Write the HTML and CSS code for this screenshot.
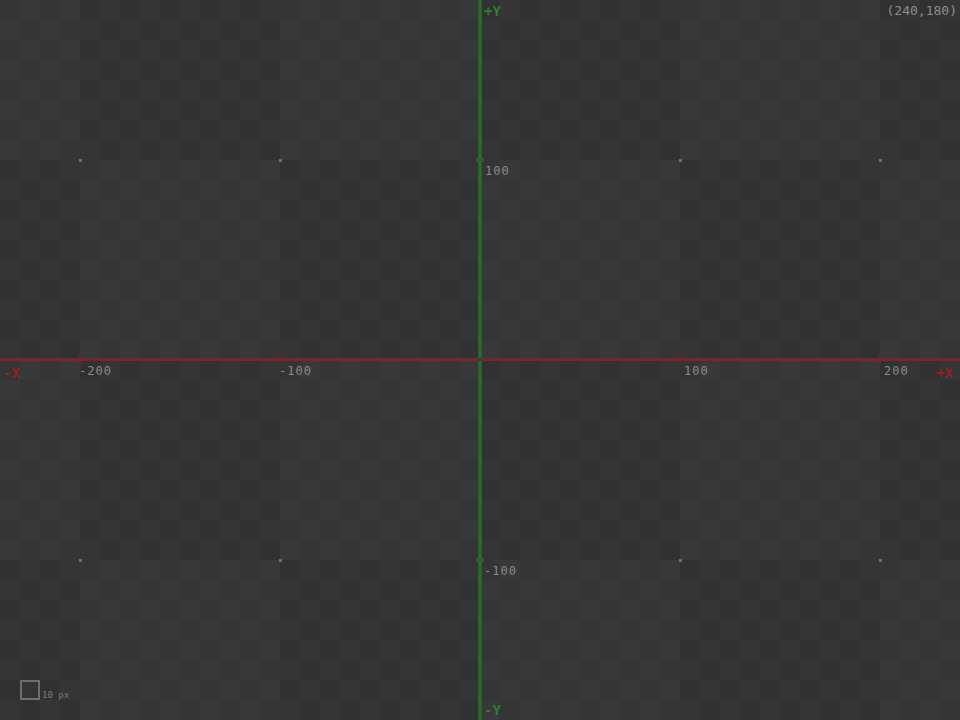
FILE: index.html
```html
<!doctype html>
<html lang="en">
<head>
	<meta charset="utf-8" />
	<title>xy grid</title>
	<link rel="stylesheet" href="styles.css">
</head>
<body>
	<!-- 坐标网格 -->
	<div class="stage">
		<div class="axis-x"></div>
		<div class="axis-y"></div>
		<div class="origin"></div>

		<!-- 刻度 x -->
		<i class="tick-x" style="left:79px"></i>
		<i class="tick-x" style="left:279px"></i>
		<i class="tick-x" style="left:679px"></i>
		<i class="tick-x" style="left:879px"></i>
		<!-- 刻度 y -->
		<i class="tick-y" style="top:158px"></i>
		<i class="tick-y" style="top:558px"></i>
		<!-- 网格点 -->
		<i class="dot" style="left:79px;top:159px"></i>
		<i class="dot" style="left:279px;top:159px"></i>
		<i class="dot" style="left:679px;top:159px"></i>
		<i class="dot" style="left:879px;top:159px"></i>
		<i class="dot" style="left:79px;top:559px"></i>
		<i class="dot" style="left:279px;top:559px"></i>
		<i class="dot" style="left:679px;top:559px"></i>
		<i class="dot" style="left:879px;top:559px"></i>

		<span class="lbl" style="left:79px;top:365px">-200</span>
		<span class="lbl" style="left:279px;top:365px">-100</span>
		<span class="lbl" style="left:684px;top:365px">100</span>
		<span class="lbl" style="left:884px;top:365px">200</span>
		<span class="lbl" style="left:485px;top:165px">100</span>
		<span class="lbl" style="left:484px;top:565px">-100</span>

		<span class="lbl red" style="left:3px;top:366px">-X</span>
		<span class="lbl red" style="left:936px;top:366px">+X</span>
		<span class="lbl green" style="left:484px;top:4px">+Y</span>
		<span class="lbl green" style="left:484px;top:703px">-Y</span>

		<span class="lbl size" style="right:3px;top:4px">(240,180)</span>

		<div class="scale">
			<div class="scale-box"></div>
			<span class="scale-txt">10 px</span>
		</div>
	</div>
</body>
</html>
```

FILE: styles.css
```css
* {
	margin: 0;
	padding: 0;
}
body {
	background-color: #353535;
	font-family: "DejaVu Sans Mono", "Liberation Mono", monospace;
}
.stage {
	width: 960px;
	height: 720px;
	position: relative;
	overflow: hidden;
	background-color: #353535;
	background-image:
		conic-gradient(rgba(0,0,0,.07) 25%, transparent 0 50%, rgba(0,0,0,.07) 0 75%, transparent 0),
		conic-gradient(#393939 25%, #353535 0 50%, #393939 0 75%, #353535 0);
	background-size: 400px 400px, 40px 40px;
	background-position: 80px 160px, 0 0;
}
/* 坐标轴 */
.axis-x {
	position: absolute;
	left: 0;
	top: 358px;
	width: 960px;
	height: 3px;
	background: linear-gradient(#6a2b2b, #7e2424, #6a2b2b);
}
.axis-y {
	position: absolute;
	left: 478px;
	top: 0;
	width: 4px;
	height: 720px;
	background: linear-gradient(90deg, #2a522a, #2c6b2c, #2c6b2c, #2a522a);
}
.origin {
	position: absolute;
	left: 478px;
	top: 358px;
	width: 4px;
	height: 3px;
	background-color: #3c3c3c;
}
.tick-x {
	position: absolute;
	top: 355px;
	width: 2px;
	height: 9px;
	background-color: #742626;
}
.tick-y {
	position: absolute;
	left: 476px;
	width: 8px;
	height: 4px;
	background-color: #2a622a;
}
.dot {
	position: absolute;
	width: 3px;
	height: 3px;
	background-color: #6e6e6e;
}
.lbl {
	position: absolute;
	font-size: 12px;
	line-height: 12px;
	letter-spacing: 1px;
	color: #8a8a8a;
}
.red {
	color: #8c2424;
	font-size: 14px;
	line-height: 14px;
	font-weight: bold;
	letter-spacing: 0;
}
.green {
	color: #2f7d2f;
	font-size: 14px;
	line-height: 14px;
	font-weight: bold;
	letter-spacing: 0;
}
.size {
	color: #8d8d8d;
	font-size: 13px;
	line-height: 14px;
	letter-spacing: 0;
}
/* 比例尺 */
.scale {
	position: absolute;
	left: 20px;
	top: 680px;
	display: flex;
	align-items: flex-end;
	gap: 2px;
}
.scale-box {
	width: 16px;
	height: 16px;
	border: 2px solid #6e6e6e;
}
.scale-txt {
	font-size: 9px;
	line-height: 9px;
	color: #7a7a7a;
}
```
